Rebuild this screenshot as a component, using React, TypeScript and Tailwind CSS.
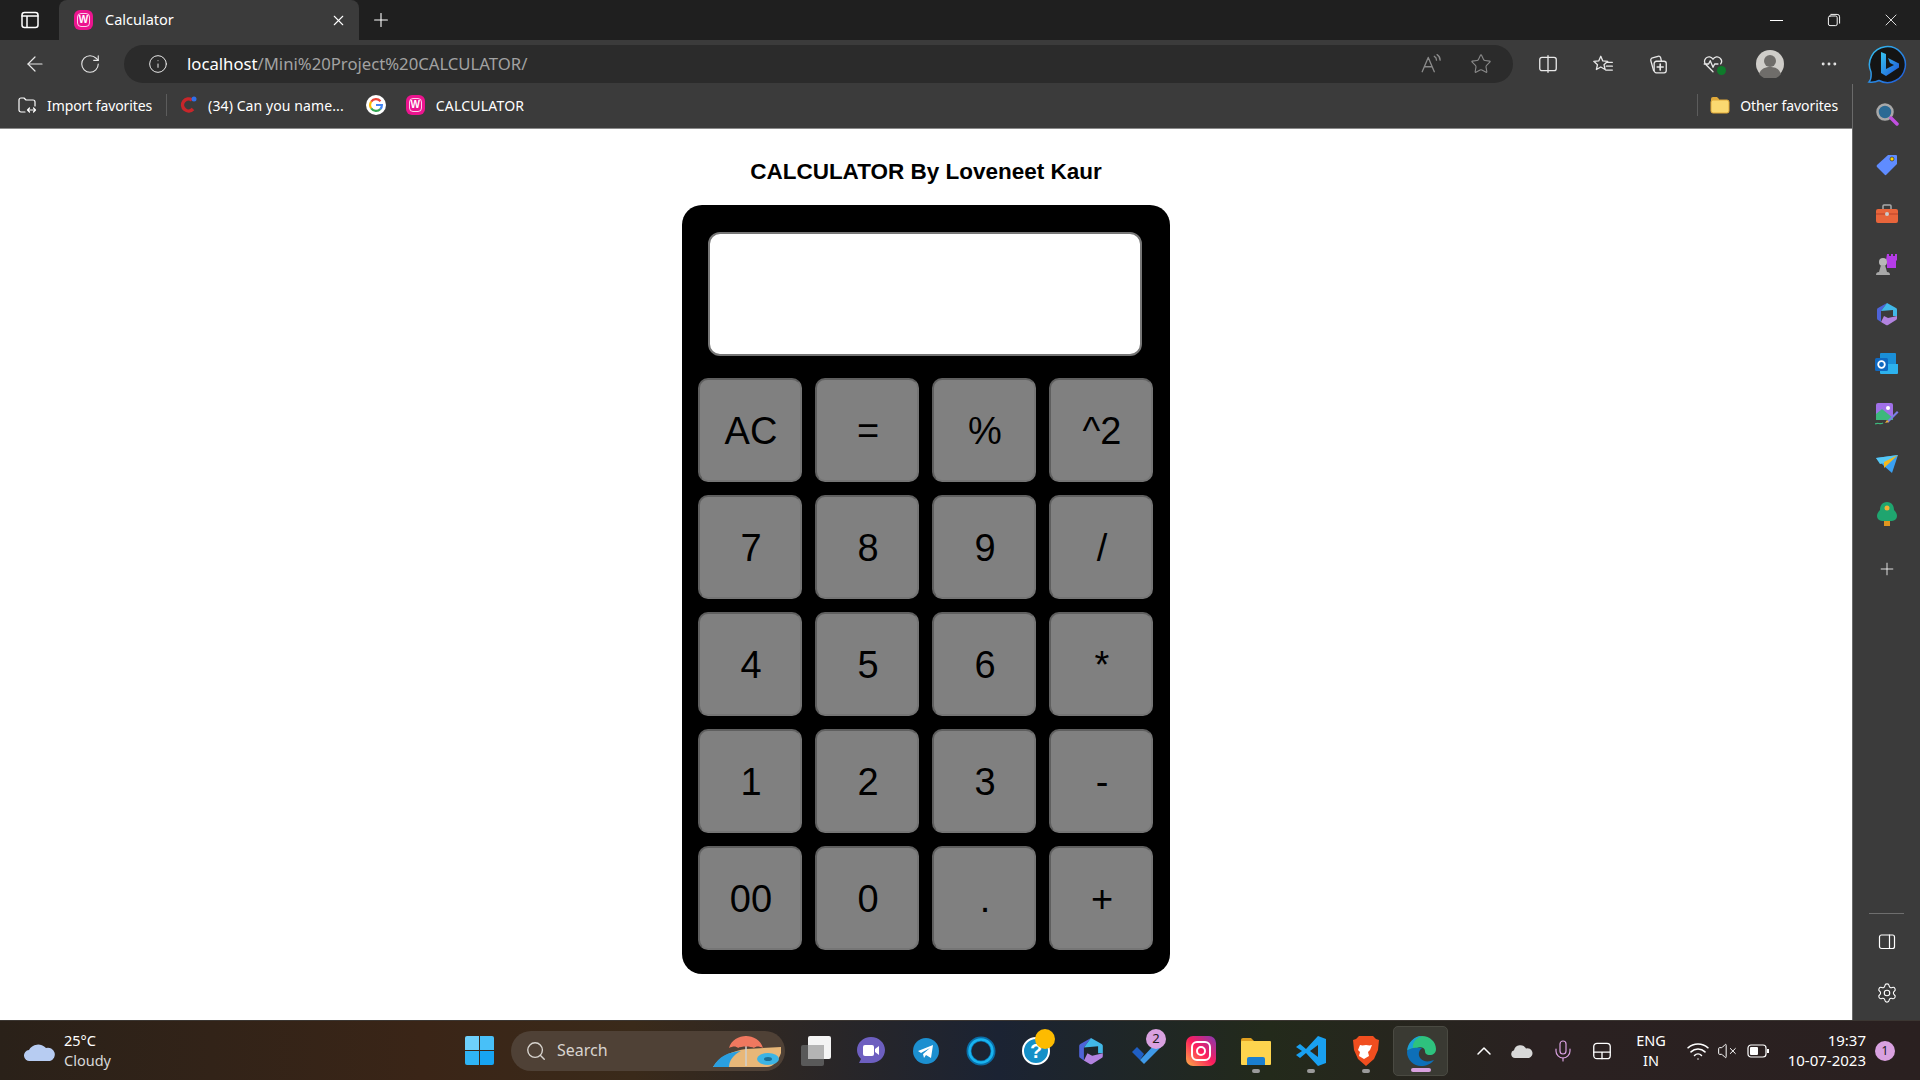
import { ArrowLeft, ChevronUp, Info, Mic, MoreHorizontal, Plus, RotateCw, Search, Settings, Star, VolumeX, Wifi, X } from "lucide-react";
import type { ReactNode } from "react";

const keys = ["AC", "=", "%", "^2", "7", "8", "9", "/", "4", "5", "6", "*", "1", "2", "3", "-", "00", "0", ".", "+"];

const Wamp = () => (
	<span className="flex h-[20px] w-[19px] items-center justify-center rounded-[6px] bg-[#ec148f] text-[10px] font-bold leading-none text-white font-['Liberation_Sans',sans-serif]">
		<span className="flex h-[14px] w-[13px] items-center justify-center rounded-[4px] border border-white/80">W</span>
	</span>
);

const GoogleLogo = () => (
	<svg width="20" height="20" viewBox="0 0 20 20">
		<circle cx="10" cy="10" r="10" fill="#fff" />
		<path d="M14.5 6.2A6 6 0 0 0 5.2 6.6" fill="none" stroke="#ea4335" strokeWidth="2.2" />
		<path d="M5.2 6.6a6 6 0 0 0 0 6.8" fill="none" stroke="#fbbc05" strokeWidth="2.2" />
		<path d="M5.2 13.4a6 6 0 0 0 9.2.6" fill="none" stroke="#34a853" strokeWidth="2.2" />
		<path d="M14.4 14a6 6 0 0 0 1.5-4H10" fill="none" stroke="#4285f4" strokeWidth="2.2" />
	</svg>
);

const Stroke = ({ size = 20, children }: { size?: number; children: ReactNode }) => (
	<svg width={size} height={size} viewBox="0 0 20 20" fill="none" stroke="currentColor" strokeWidth="1.2" strokeLinecap="round" strokeLinejoin="round">
		{children}
	</svg>
);

const Slot = ({ className, children }: { className: string; children: ReactNode }) => (
	<div className={`flex shrink-0 items-center justify-center ${className}`}>{children}</div>
);

const TitleBar = () => (
	<div className="flex h-[40px] shrink-0 items-end bg-[#1f1f1f] text-white">
		<Slot className="h-[40px] w-[59px]">
			<Stroke size={20}>
				<rect x="2" y="2.5" width="16" height="15" rx="2.5" strokeWidth="1.5" />
				<path d="M2 6h16M7 6v11" strokeWidth="1.5" />
			</Stroke>
		</Slot>
		<div className="flex h-[40px] w-[300px] items-center rounded-t-[8px] bg-[#3b3b3b] pl-[15px] pr-[12px]">
			<Wamp />
			<span className="ml-[12px] pb-[1px] text-[14.5px]">Calculator</span>
			<X size={17} strokeWidth={1.5} className="ml-auto" />
		</div>
		<Slot className="ml-[6px] h-[40px] w-[32px]">
			<Plus size={22} strokeWidth={1.2} />
		</Slot>
		<div className="ml-auto flex h-[40px] items-center">
			<Slot className="w-[57px]">
				<div className="h-px w-[13px] bg-white" />
			</Slot>
			<Slot className="w-[57px]">
				<Stroke size={16}>
					<rect x="3" y="5" width="11" height="12" rx="2" />
					<path d="M6 3h8a3 3 0 0 1 3 3v8" />
				</Stroke>
			</Slot>
			<Slot className="w-[58px]">
				<X size={20} strokeWidth={1} />
			</Slot>
		</div>
	</div>
);

const ToolBar = () => (
	<div className="flex h-[44px] shrink-0 items-center bg-[#3b3b3b] pl-[7px] pt-[4px] text-[#e8e8e8]">
		<Slot className="w-[55px]">
			<ArrowLeft size={24} strokeWidth={1.2} />
		</Slot>
		<Slot className="w-[55px]">
			<RotateCw size={22} strokeWidth={1.2} />
		</Slot>
		<div className="ml-[7px] flex h-[38px] w-[1389px] items-center rounded-full bg-[#2b2b2b] pl-[24px] pr-[21px]">
			<Info size={20} strokeWidth={1.2} />
			<span className="ml-[19px] pb-[1px] text-[16.7px] text-[#a2a2a2]">
				<span className="text-white">localhost</span>/Mini%20Project%20CALCULATOR/
			</span>
			<div className="ml-auto flex items-center gap-[28px] text-[#8a8a8a]">
				<Stroke size={22}>
					<path d="M2 17 7.5 4 13 17M4 12.500h7M13 3c1.500.8 2 2 2 3.500M15.500 1.500c2 1.200 2.800 3 2.800 5" />
				</Stroke>
				<Star size={22} strokeWidth={1.2} />
			</div>
		</div>
		<div className="ml-[7px] flex items-center">
			<Slot className="w-[55px]">
				<Stroke size={22}>
					<rect x="2.500" y="4" width="15" height="12" rx="2" />
					<path d="M10 2.500v15" />
				</Stroke>
			</Slot>
			<Slot className="w-[55px]">
				<Stroke size={22}>
					<path d="m8 3 1.800 4.200 4.500.4-3.400 3 1 4.400L8 12.700 4 15l1-4.400-3.400-3 4.500-.4zM14 8.500h4.500M13 12h5.500M12.500 15.500h6" />
				</Stroke>
			</Slot>
			<Slot className="w-[55px]">
				<Stroke size={22}>
					<path d="M6 16 3.500 7a2 2 0 0 1 1.400-2.500L10 3a2 2 0 0 1 2.400 1.300L13 7" />
					<rect x="6.500" y="7.500" width="11" height="10.500" rx="2" />
					<path d="M12 10v5.500M9.300 12.700h5.400" strokeWidth="1.500" />
				</Stroke>
			</Slot>
			<Slot className="relative w-[55px]">
				<Stroke size={22}>
					<path d="M10 17 3.500 10.500a4 4 0 0 1 0-5.800 4 4 0 0 1 6.500 1 4 4 0 0 1 6.500-1 4 4 0 0 1 .5 5.200M2 10h4l1.500-3 2.500 6 1.500-3h3" />
				</Stroke>
				<span className="absolute left-[32px] top-[13px] h-[9px] w-[9px] rounded-full bg-[#0f7b2b]" />
			</Slot>
			<Slot className="w-[60px]">
				<svg width="28" height="28" viewBox="0 0 28 28">
					<circle cx="14" cy="14" r="14" fill="#cfcdc9" />
					<circle cx="14" cy="11" r="6" fill="#6f6d6a" />
					<path d="M3 24c2-6 7-7 11-7s9 1 11 7a14 14 0 0 1-22 0z" fill="#6f6d6a" />
				</svg>
			</Slot>
			<Slot className="w-[57px]">
				<MoreHorizontal size={20} strokeWidth={1.5} />
			</Slot>
			<Slot className="w-[60px]">
				<svg width="40" height="40" viewBox="0 0 40 40">
					<defs>
						<linearGradient id="bing" x1="0" y1="0" x2="1" y2="1">
							<stop offset="0" stopColor="#36c3f0" />
							<stop offset="1" stopColor="#1e56d8" />
						</linearGradient>
					</defs>
					<path d="M2 38c2-2 2.500-5 2-10a18 18 0 1 1 8 8.500c-3 1.500-6 2-10 1.500z" fill="#141414" stroke="url(#bing)" strokeWidth="1.500" />
					<path d="M14 8l5 2v15l8-4-4-2-2-5 11 5.500v4L19 32l-5-3z" fill="url(#bing)" />
				</svg>
			</Slot>
		</div>
	</div>
);

const FavBar = () => (
	<div className="flex h-[45px] shrink-0 items-center border-b border-[#8a8a8a] bg-[#3b3b3b] pb-[2px] pl-[17px] pr-[14px] text-[14px] text-white">
		<Stroke size={20}>
			<path d="M8 17H4a2 2 0 0 1-2-2V5a2 2 0 0 1 2-2h3l2 2h7a2 2 0 0 1 2 2v4M11 15h7M12.500 13 10.500 15l2 2M16.500 13l2 2-2 2" />
		</Stroke>
		<span className="ml-[10px] tracking-[-0.1px]">Import favorites</span>
		<div className="ml-[14px] h-[22px] w-px bg-[#5c5c5c]" />
		<svg width="20" height="20" viewBox="0 0 20 20" className="ml-[12px]">
			<path d="M13 5a6 6 0 1 0 1 9" fill="none" stroke="#c8262a" strokeWidth="3.500" />
			<circle cx="15" cy="4" r="2.500" fill="#2f6fe8" />
		</svg>
		<span className="ml-[9px] tracking-[0.1px]">(34) Can you name...</span>
		<div className="ml-[22px]">
			<GoogleLogo />
		</div>
		<div className="ml-[20px]">
			<Wamp />
		</div>
		<span className="ml-[11px] tracking-[0.2px]">CALCULATOR</span>
		<div className="ml-auto h-[22px] w-px bg-[#5c5c5c]" />
		<svg width="20" height="18" viewBox="0 0 20 18" className="ml-[12px]">
			<path d="M1 3a2 2 0 0 1 2-2h4l2 2v2H1z" fill="#e0a93a" />
			<rect x="1" y="4" width="18" height="13" rx="2" fill="#fbd971" stroke="#e0a93a" />
		</svg>
		<span className="ml-[10px] tracking-[-0.1px]">Other favorites</span>
	</div>
);

const Calculator = () => (
	<div className="flex min-h-0 flex-1 flex-col items-center bg-white font-['Liberation_Sans',sans-serif] text-black">
		<h1 className="mt-[29px] text-[22.5px] font-bold leading-[28px]">CALCULATOR By Loveneet Kaur</h1>
		<div className="mt-[19px] w-[488px] rounded-[20px] bg-black pb-[24px] pl-[16px] pr-[17px] pt-[27px]">
			<div className="ml-[10px] h-[124px] w-[434px] rounded-[12px] border-2 border-[#767676] bg-white" />
			<div className="mt-[22px] grid grid-cols-4 gap-[13px]">
				{keys.map((key) => (
					<button
						key={key}
						className="flex h-[104px] w-[104px] items-center justify-center rounded-[10px] border-2 border-t-[#5f5f5f] border-r-[#757575] border-b-[#757575] border-l-[#5f5f5f] bg-[#808080] pl-[2px] pt-[2px] text-[38px]"
					>
						{key}
					</button>
				))}
			</div>
		</div>
	</div>
);

const SideSlot = ({ children }: { children: ReactNode }) => <div className="flex h-[50px] items-center justify-center">{children}</div>;

const SideBar = () => (
	<div className="flex w-[68px] shrink-0 flex-col items-center border-l border-[#6a6a6a] bg-[#3b3b3b] text-white">
		<div className="mt-[5px] flex flex-col items-center">
			<SideSlot>
				<svg width="24" height="24" viewBox="0 0 24 24">
					<circle cx="10" cy="10" r="7.500" fill="#2b6a94" stroke="#a8a8a8" strokeWidth="2.500" />
					<path d="m16 16 6 6" stroke="#c14fe0" strokeWidth="3.500" strokeLinecap="round" />
				</svg>
			</SideSlot>
			<SideSlot>
				<svg width="24" height="24" viewBox="0 0 24 24">
					<path d="M2 13 13 3h8a1 1 0 0 1 1 1v8L11 23a1 1 0 0 1-1 0l-8-8a1.500 1.500 0 0 1 0-2z" fill="#5f8cff" />
					<circle cx="17" cy="7" r="2" fill="#ffd400" stroke="#222" strokeWidth=".6" />
				</svg>
			</SideSlot>
			<SideSlot>
				<svg width="24" height="24" viewBox="0 0 24 24">
					<path d="M8 7V4a1 1 0 0 1 1-1h6a1 1 0 0 1 1 1v3" fill="none" stroke="#aaa" strokeWidth="1.500" />
					<rect x="1" y="7" width="22" height="14" rx="2" fill="#e8653b" />
					<path d="M1 12h22" stroke="#b9432a" />
					<rect x="10" y="10" width="4" height="4" rx="2" fill="#ccc" />
				</svg>
			</SideSlot>
			<SideSlot>
				<svg width="24" height="24" viewBox="0 0 24 24">
					<path d="M13 2h2v2h2V2h2v2h2V2h2v6l-1 1v7h-9V9l-1-1z" fill="#b53ce8" transform="translate(-1 0)" />
					<circle cx="8" cy="10" r="4" fill="#b8b8b8" />
					<path d="M6 13h4l2 7H4zM1 23a3 3 0 0 1 3-3h8a3 3 0 0 1 3 3z" fill="#a8a8a8" />
				</svg>
			</SideSlot>
			<SideSlot>
				<svg width="22" height="24" viewBox="0 0 22 24">
					<path d="M11 1 2 6a2 2 0 0 0-1 2v8a2 2 0 0 0 1 2l3 2V9z" fill="#4e63d8" />
					<path d="M11 1l9 5a2 2 0 0 1 1 2v6h-4V8L5 9z" fill="#41b8e8" />
					<path d="M5 20l5 3a2 2 0 0 0 2 0l8-5a2 2 0 0 0 1-2v-2L12 16 8 14z" fill="#b283e0" />
				</svg>
			</SideSlot>
			<SideSlot>
				<svg width="24" height="24" viewBox="0 0 24 24">
					<rect x="5" y="1" width="16" height="12" rx="1" fill="#1a8fd8" />
					<path d="M5 12h18v9a1 1 0 0 1-1 1H6a1 1 0 0 1-1-1z" fill="#2db2ee" />
					<rect x="0" y="6" width="13" height="13" rx="1.500" fill="#0f68c0" />
					<circle cx="6.500" cy="12.500" r="3.300" fill="none" stroke="#fff" strokeWidth="1.800" />
				</svg>
			</SideSlot>
			<SideSlot>
				<svg width="24" height="24" viewBox="0 0 24 24">
					<rect x="1" y="1" width="17" height="17" rx="2" fill="#a070e8" />
					<path d="M1 12l6-5 11 9v2H1z" fill="#3db87c" />
					<circle cx="13" cy="6" r="2" fill="#fff" />
					<path d="m12 19 10-10 1.500 1.500L13 21z" fill="#7a7ee8" />
					<path d="M10 21l2-3 2 2z" fill="#f2b134" />
					<path d="M0 22c3-2 5 1 8-1" fill="none" stroke="#3db87c" strokeWidth="1.200" />
				</svg>
			</SideSlot>
			<SideSlot>
				<svg width="24" height="20" viewBox="0 0 24 20">
					<path d="M1 4 23 1 17 19 9 12z" fill="#3aa0f2" />
					<path d="M1 4 23 1 9 9 5 10z" fill="#55c8f5" />
					<path d="M9 8 23 1 9 14z" fill="#f4b81c" />
				</svg>
			</SideSlot>
			<SideSlot>
				<svg width="20" height="24" viewBox="0 0 20 24">
					<rect x="7" y="16" width="6" height="8" fill="#e0951f" />
					<path d="M10 0c5 0 7 4 7 8 2 2 3 4 3 6a5 5 0 0 1-5 5H5a5 5 0 0 1-5-5c0-2 1-4 3-6 0-4 2-8 7-8z" fill="#1fa56f" />
					<circle cx="10" cy="6" r="2.500" fill="#f2b134" />
				</svg>
			</SideSlot>
		</div>
		<div className="mt-[20px]">
			<Plus size={20} strokeWidth={1} />
		</div>
		<div className="mt-auto h-px w-[35px] bg-[#6e6e6e]" />
		<div className="mt-[18px]">
			<Stroke size={20}>
				<rect x="2.500" y="3" width="15" height="13.500" rx="2" />
				<path d="M12.500 3v13.500" />
			</Stroke>
		</div>
		<div className="mb-[16px] mt-[30px]">
			<Settings size={22} strokeWidth={1.2} />
		</div>
	</div>
);

const Dot = ({ active }: { active?: boolean }) => (
	<span className={`absolute bottom-[3px] left-1/2 h-[4px] -translate-x-1/2 rounded-full ${active ? "w-[20px] bg-[#d9a1e0]" : "w-[8px] bg-[#9a9a9a]"}`} />
);

const TaskSlot = ({ children, className = "" }: { children: ReactNode; className?: string }) => (
	<div className={`relative flex h-[50px] w-[55px] shrink-0 items-center justify-center ${className}`}>{children}</div>
);

const Badge = ({ className, children }: { className: string; children?: ReactNode }) => (
	<span className={`absolute flex h-[20px] w-[20px] items-center justify-center rounded-full text-[13px] text-[#1a1a1a] ${className}`}>{children}</span>
);

const TaskBar = () => (
	<div className="flex h-[60px] shrink-0 items-center border-t border-[#3b3632] bg-[linear-gradient(90deg,#2a2119_0%,#3a2517_22%,#3a2a1a_33%,#1b2333_52%,#232a1b_66%,#2a2121_80%,#2a2020_100%)] text-white">
		<div className="ml-[24px] flex w-[441px] shrink-0 items-center">
			<svg width="32" height="22" viewBox="0 0 32 22">
				<path d="M6 21a5.500 5.500 0 0 1-1-11A10 9 0 0 1 22 8a6.500 6.500 0 0 1 4 13z" fill="#b7ccf2" />
			</svg>
			<div className="ml-[8px] pb-[2px] text-[14.5px] leading-[20px]">
				<div>25°C</div>
				<div className="text-[#d8d8d8]">Cloudy</div>
			</div>
		</div>
		<div className="grid h-[29px] w-[29px] shrink-0 grid-cols-2 gap-[1px]">
			<span className="rounded-tl-[2px] bg-[#6ed0fb]" />
			<span className="rounded-tr-[2px] bg-[#48c0f8]" />
			<span className="rounded-bl-[2px] bg-[#2fb4f5]" />
			<span className="rounded-br-[2px] bg-[#17a4f2]" />
		</div>
		<div className="relative ml-[17px] flex h-[40px] w-[274px] shrink-0 items-center rounded-full bg-[#4f4136] pl-[14px] text-[#d8d4cf]">
			<Search size={22} strokeWidth={1.5} />
			<span className="ml-[10px] pb-[1px] text-[16px]">Search</span>
			<svg width="68" height="34" viewBox="0 0 68 34" className="absolute right-[4px] top-[3px]">
				<path d="M0 33c8-12 20-16 33-18l35-2v6c-3 8-8 14-14 14z" fill="#e8b778" />
				<path d="M0 33c6-11 16-15 28-16-8 4-12 10-12 16z" fill="#2a9fe0" />
				<path d="M33 2v30" stroke="#cfcfcf" strokeWidth="1.500" />
				<path d="M16 14C18 6 26 2 33 2s15 4 17 12c-4-2-7-2-9 0-3-2-13-2-16 0-2-2-5-2-9 0z" fill="#f0785f" />
				<ellipse cx="55" cy="25" rx="11" ry="6" fill="#3cb4e4" />
				<ellipse cx="55" cy="25" rx="4" ry="2" fill="#1d6f95" />
			</svg>
		</div>
		<TaskSlot className="ml-[3px]">
			<svg width="30" height="30" viewBox="0 0 30 30">
				<rect x="0" y="9" width="23" height="21" rx="2" fill="#595959" />
				<rect x="7" y="0" width="23" height="23" rx="2" fill="#f4f4f4" />
				<rect x="7" y="9" width="16" height="14" fill="#b4b4b4" />
			</svg>
		</TaskSlot>
		<TaskSlot>
			<svg width="28" height="30" viewBox="0 0 28 30">
				<path d="M14 1C22 1 28 7 28 14s-6 13-14 13H2l2-4C1 20 0 17 0 14 0 7 6 1 14 1z" fill="#6d5fc0" />
				<rect x="6" y="9" width="11" height="11" rx="2" fill="#fff" />
				<path d="m18 13 4-3v9l-4-3z" fill="#fff" />
			</svg>
		</TaskSlot>
		<TaskSlot>
			<svg width="26" height="26" viewBox="0 0 26 26">
				<circle cx="13" cy="13" r="13" fill="#1c8fd0" />
				<path d="m5 13 15-6-2 13-5-3-2 3-1-4 7-6-9 5z" fill="#fff" />
			</svg>
		</TaskSlot>
		<TaskSlot>
			<svg width="30" height="30" viewBox="0 0 30 30">
				<circle cx="15" cy="15" r="12" fill="none" stroke="#0a6ea8" strokeWidth="5" />
				<circle cx="15" cy="15" r="11.500" fill="none" stroke="#18b4f0" strokeWidth="2.500" />
			</svg>
		</TaskSlot>
		<TaskSlot>
			<svg width="30" height="30" viewBox="0 0 30 30">
				<circle cx="15" cy="15" r="13" fill="#1590c8" stroke="#fff" strokeWidth="2" />
			</svg>
			<span className="absolute left-[22px] top-[10px] text-[20px] font-bold leading-[30px] text-white font-['Liberation_Sans',sans-serif]">?</span>
			<Badge className="left-[27px] top-[3px] bg-[#fdbb00]" />
		</TaskSlot>
		<TaskSlot>
			<svg width="26" height="30" viewBox="0 0 22 24">
				<path d="M11 1 2 6a2 2 0 0 0-1 2v8a2 2 0 0 0 1 2l3 2V9z" fill="#4e63d8" />
				<path d="M11 1l9 5a2 2 0 0 1 1 2v6h-4V8L5 9z" fill="#41b8e8" />
				<path d="M5 20l5 3a2 2 0 0 0 2 0l8-5a2 2 0 0 0 1-2v-2L12 16 8 14z" fill="#b283e0" />
			</svg>
		</TaskSlot>
		<TaskSlot>
			<svg width="30" height="26" viewBox="0 0 30 26">
				<path d="m1 14 5-5 7 7-4 6z" fill="#1f5fc4" />
				<path d="M9 22 26 4l4 5-17 17z" fill="#3f9ae8" />
			</svg>
			<Badge className="left-[28px] top-[3px] bg-[#d9a1e0]">2</Badge>
		</TaskSlot>
		<TaskSlot>
			<div className="flex h-[30px] w-[30px] items-center justify-center rounded-[7px] bg-[linear-gradient(45deg,#fcb045_0%,#fd1d5d_50%,#833ab4_100%)]">
				<div className="relative h-[20px] w-[20px] rounded-[6px] border-2 border-white">
					<div className="absolute left-[3px] top-[3px] h-[10px] w-[10px] rounded-full border-2 border-white" />
				</div>
			</div>
		</TaskSlot>
		<TaskSlot>
			<svg width="30" height="28" viewBox="0 0 30 28">
				<path d="M0 3a2 2 0 0 1 2-2h8l3 3v4H0z" fill="#e0a020" />
				<rect y="4" width="30" height="24" rx="1" fill="#fdd44e" />
				<path d="M6 28v-6a2 2 0 0 1 2-2h14a2 2 0 0 1 2 2v6z" fill="#1a7fd0" />
			</svg>
			<Dot />
		</TaskSlot>
		<TaskSlot>
			<svg width="30" height="30" viewBox="0 0 30 30">
				<path d="M22 0 10 13 4 8 0 11l6 4-6 4 4 3 6-5 12 13 8-3V3z" fill="#19a0f0" />
				<path d="m22 9-8 6 8 6z" fill="#2b2a1f" />
			</svg>
			<Dot />
		</TaskSlot>
		<TaskSlot>
			<svg width="26" height="30" viewBox="0 0 26 30">
				<path d="M6 0h14l3 3 3 1-1 10-4 9-8 7-8-7-4-9L0 4l3-1z" fill="#f04e1f" />
				<path d="M7 9c3 1 4 0 6 0s3 1 6 0l-2 5-2 2 1 4-5 3-5-3 1-4-2-2z" fill="#fff" />
			</svg>
			<Dot />
		</TaskSlot>
		<TaskSlot className="rounded-[5px] border border-[#4a4a42] bg-[#3a3a33]">
			<svg width="30" height="32" viewBox="0 0 30 32">
				<path d="M2 18C2 7 9 1 16 1c8 0 14 6 14 13 0 4-3 6-6 6-4 0-5-2-5-4 0-3-4-5-8-3-4 2-5 6-3 10-4-1-6-3-6-5z" fill="#2ec27e" />
				<path d="M1 17C1 25 8 31 15 31c5 0 10-2 13-6-5 2-10 2-13-1-3-3-3-8 1-11-6-1-15 0-15 4z" fill="#0d6fb8" />
				<path d="M1 17c0-9 7-16 15-16-7 2-10 8-9 12-3 0-6 2-6 4z" fill="#1aa0d8" />
			</svg>
			<Dot active />
		</TaskSlot>
		<Slot className="ml-[20px] w-[32px]">
			<ChevronUp size={24} strokeWidth={1.5} />
		</Slot>
		<Slot className="ml-[10px] w-[24px]">
			<svg width="22" height="14" viewBox="0 0 22 14">
				<path d="M4 14a4 4 0 0 1-1-7.800A6.500 6.500 0 0 1 15 4.500a4.800 4.800 0 0 1 3 9.500z" fill="#d8d8d8" />
			</svg>
		</Slot>
		<Slot className="ml-[17px] w-[24px] text-[#d9a1e0]">
			<Mic size={24} strokeWidth={1.2} />
		</Slot>
		<Slot className="ml-[15px] w-[24px]">
			<Stroke size={22}>
				<rect x="2.500" y="3" width="15" height="14" rx="3" />
				<path d="M2.500 11h15M10 11v6" />
			</Stroke>
		</Slot>
		<div className="ml-[20px] w-[34px] shrink-0 pb-[2px] text-center text-[14.5px] leading-[20px]">
			<div>ENG</div>
			<div>IN</div>
		</div>
		<Slot className="ml-[18px] w-[24px]">
			<Wifi size={24} strokeWidth={1.5} />
		</Slot>
		<Slot className="ml-[5px] w-[24px]">
			<VolumeX size={20} strokeWidth={1.2} />
		</Slot>
		<Slot className="ml-[7px] w-[24px]">
			<svg width="22" height="14" viewBox="0 0 22 14">
				<rect x="1" y="1" width="18" height="12" rx="3" fill="none" stroke="#fff" strokeWidth="1.200" />
				<rect x="3" y="3" width="8" height="8" rx="1" fill="#fff" />
				<rect x="20" y="5" width="2" height="4" fill="#fff" />
			</svg>
		</Slot>
		<div className="ml-auto pb-[2px] text-right text-[15px] leading-[20px]">
			<div>19:37</div>
			<div>10-07-2023</div>
		</div>
		<span className="ml-[9px] mr-[25px] flex h-[20px] w-[20px] items-center justify-center rounded-full bg-[#d9a1e0] text-[12px] text-[#1a1a1a]">1</span>
	</div>
);

export default function App() {
	return (
		<div className="flex h-[1080px] w-[1920px] flex-col overflow-hidden font-['Noto_Sans','Open_Sans',sans-serif]">
			<TitleBar />
			<ToolBar />
			<div className="flex min-h-0 flex-1">
				<div className="flex min-w-0 flex-1 flex-col">
					<FavBar />
					<Calculator />
				</div>
				<SideBar />
			</div>
			<TaskBar />
		</div>
	);
}
